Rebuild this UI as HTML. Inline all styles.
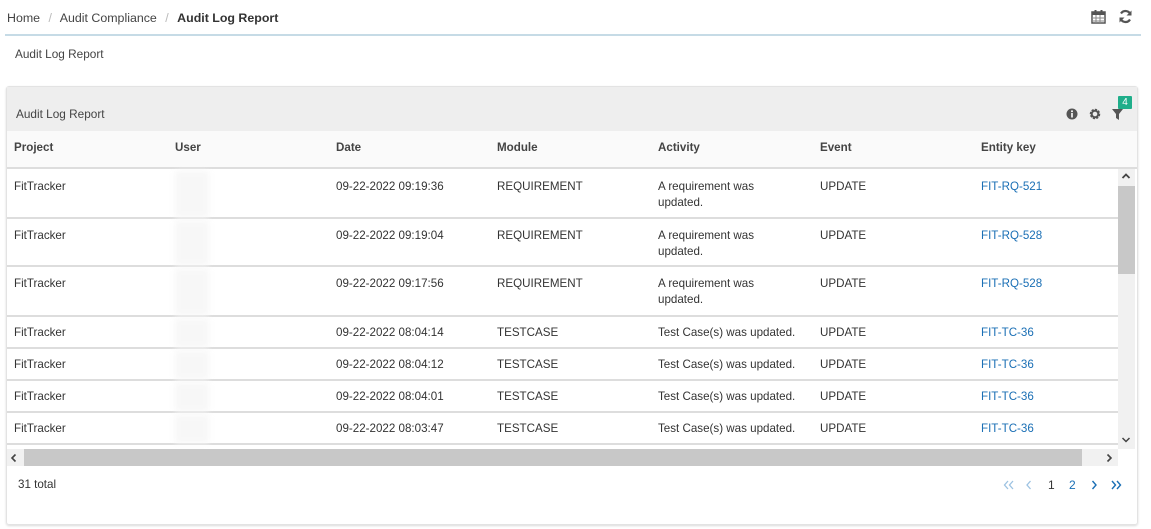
<!DOCTYPE html>
<html><head><style>
*{margin:0;padding:0;box-sizing:border-box}
body{width:1151px;height:529px;background:#fff;font-family:"Liberation Sans",sans-serif;font-size:12px;color:#333;position:relative;overflow:hidden}
.a{position:absolute;white-space:nowrap}
.row{position:absolute;left:7px;width:1111px;border-bottom:2px solid #ddd}
.cell{position:absolute;font-size:11.6px;color:#333;line-height:16px;white-space:nowrap}
.cell.link{color:#1a6fb5}
.blur{position:absolute;left:168px;width:34px;background:#f7f7f7;filter:blur(3px)}
.h{top:141px;font-weight:bold;font-size:11.6px;color:#444}
.arr{position:absolute;font-family:"DejaVu Sans",sans-serif;font-size:13px;color:#333}
</style></head><body>
<div class="a" style="left:7px;top:11px;font-size:12.4px;color:#444">Home <span style="color:#bbb;margin:0 5px">/</span> Audit Compliance <span style="color:#bbb;margin:0 5px">/</span> <b style="color:#333">Audit Log Report</b></div>
<svg class="a" style="left:1091px;top:9px" width="15" height="15" viewBox="0 0 15 15"><rect x="1" y="3" width="13" height="11" fill="none" stroke="#555" stroke-width="1.5"/><rect x="1" y="3" width="13" height="3" fill="#555"/><path d="M5 6v8M9 6v8M1 9h13M1 12h13" stroke="#888" stroke-width="1"/><rect x="3.5" y="1" width="2" height="3" fill="#555"/><rect x="9.5" y="1" width="2" height="3" fill="#555"/></svg>
<svg class="a" style="left:1118px;top:9px" width="15" height="15" viewBox="0 0 15 15"><path d="M12.5 6A5.2 5.2 0 0 0 3 4.5M2.5 9A5.2 5.2 0 0 0 12 10.5" fill="none" stroke="#555" stroke-width="2.2"/><path d="M13.5 1.5v5h-5zM1.5 13.5v-5h5z" fill="#555"/></svg>
<div class="a" style="left:5px;top:34px;width:1136px;height:2px;background:#c6dbe6"></div>
<div class="a" style="left:15px;top:47px;font-size:11.8px;color:#444">Audit Log Report</div>
<div class="a" style="left:6px;top:86px;width:1132px;height:439px;border:1px solid #e3e3e3;border-radius:3px;box-shadow:0 1px 2px rgba(0,0,0,.15)"></div>
<div class="a" style="left:7px;top:87px;width:1130px;height:44px;background:#eeeeee"></div>
<div class="a" style="left:16px;top:107px;font-size:11.8px;color:#444">Audit Log Report</div>
<svg class="a" style="left:1066px;top:108px" width="12" height="12" viewBox="0 0 12 12"><circle cx="6" cy="6" r="5.5" fill="#555"/><rect x="5.2" y="5" width="1.6" height="4.5" fill="#fff"/><circle cx="6" cy="3.3" r="1" fill="#fff"/></svg>
<svg class="a" style="left:1089px;top:108px" width="12" height="12" viewBox="0 0 12 12"><circle cx="6" cy="6" r="4" fill="none" stroke="#555" stroke-width="2.5" stroke-dasharray="2 1.1"/><circle cx="6" cy="6" r="3.3" fill="none" stroke="#555" stroke-width="2"/></svg>
<svg class="a" style="left:1112px;top:108px" width="11" height="12" viewBox="0 0 11 12"><path d="M0 1h11L7 6v6L4 10V6z" fill="#555"/></svg>
<div class="a" style="left:1118px;top:96px;width:14px;height:13px;background:#1fae8a;color:#fff;font-size:10px;text-align:center;line-height:13px;border-radius:1px">4</div>
<div class="a" style="left:7px;top:131px;width:1130px;height:38px;background:#fafafa;border-bottom:2px solid #ddd"></div>
<div class="a h" style="left:14px">Project</div>
<div class="a h" style="left:175px">User</div>
<div class="a h" style="left:336px">Date</div>
<div class="a h" style="left:497px">Module</div>
<div class="a h" style="left:658px">Activity</div>
<div class="a h" style="left:820px">Event</div>
<div class="a h" style="left:981px">Entity key</div>

<div class="row" style="top:169px;height:50px"><div class="cell" style="left:7px;top:10px">FitTracker</div><div class="blur" style="top:2px;height:46px"></div><div class="cell" style="left:329px;top:10px">09-22-2022 09:19:36</div><div class="cell" style="left:490px;top:10px">REQUIREMENT</div><div class="cell" style="left:651px;top:10px">A requirement was<br>updated.</div><div class="cell" style="left:813px;top:10px">UPDATE</div><div class="cell link" style="left:974px;top:10px">FIT-RQ-521</div></div>
<div class="row" style="top:219px;height:48px"><div class="cell" style="left:7px;top:9px">FitTracker</div><div class="blur" style="top:2px;height:44px"></div><div class="cell" style="left:329px;top:9px">09-22-2022 09:19:04</div><div class="cell" style="left:490px;top:9px">REQUIREMENT</div><div class="cell" style="left:651px;top:9px">A requirement was<br>updated.</div><div class="cell" style="left:813px;top:9px">UPDATE</div><div class="cell link" style="left:974px;top:9px">FIT-RQ-528</div></div>
<div class="row" style="top:267px;height:50px"><div class="cell" style="left:7px;top:9px">FitTracker</div><div class="blur" style="top:2px;height:46px"></div><div class="cell" style="left:329px;top:9px">09-22-2022 09:17:56</div><div class="cell" style="left:490px;top:9px">REQUIREMENT</div><div class="cell" style="left:651px;top:9px">A requirement was<br>updated.</div><div class="cell" style="left:813px;top:9px">UPDATE</div><div class="cell link" style="left:974px;top:9px">FIT-RQ-528</div></div>
<div class="row" style="top:317px;height:32px"><div class="cell" style="left:7px;top:8px">FitTracker</div><div class="blur" style="top:2px;height:28px"></div><div class="cell" style="left:329px;top:8px">09-22-2022 08:04:14</div><div class="cell" style="left:490px;top:8px">TESTCASE</div><div class="cell" style="left:651px;top:8px">Test Case(s) was updated.</div><div class="cell" style="left:813px;top:8px">UPDATE</div><div class="cell link" style="left:974px;top:8px">FIT-TC-36</div></div>
<div class="row" style="top:349px;height:32px"><div class="cell" style="left:7px;top:8px">FitTracker</div><div class="blur" style="top:2px;height:28px"></div><div class="cell" style="left:329px;top:8px">09-22-2022 08:04:12</div><div class="cell" style="left:490px;top:8px">TESTCASE</div><div class="cell" style="left:651px;top:8px">Test Case(s) was updated.</div><div class="cell" style="left:813px;top:8px">UPDATE</div><div class="cell link" style="left:974px;top:8px">FIT-TC-36</div></div>
<div class="row" style="top:381px;height:32px"><div class="cell" style="left:7px;top:8px">FitTracker</div><div class="blur" style="top:2px;height:28px"></div><div class="cell" style="left:329px;top:8px">09-22-2022 08:04:01</div><div class="cell" style="left:490px;top:8px">TESTCASE</div><div class="cell" style="left:651px;top:8px">Test Case(s) was updated.</div><div class="cell" style="left:813px;top:8px">UPDATE</div><div class="cell link" style="left:974px;top:8px">FIT-TC-36</div></div>
<div class="row" style="top:413px;height:32px"><div class="cell" style="left:7px;top:8px">FitTracker</div><div class="blur" style="top:2px;height:28px"></div><div class="cell" style="left:329px;top:8px">09-22-2022 08:03:47</div><div class="cell" style="left:490px;top:8px">TESTCASE</div><div class="cell" style="left:651px;top:8px">Test Case(s) was updated.</div><div class="cell" style="left:813px;top:8px">UPDATE</div><div class="cell link" style="left:974px;top:8px">FIT-TC-36</div></div>

<div class="a" style="left:1118px;top:169px;width:17px;height:280px;background:#f1f1f1"></div>
<div class="a" style="left:1118px;top:186px;width:17px;height:88px;background:#c8c8c8"></div>
<svg class="a" style="left:1121px;top:172px" width="10" height="8" viewBox="0 0 10 8"><path d="M1.5 6L5 2.5 8.5 6" fill="none" stroke="#444" stroke-width="1.8"/></svg>
<svg class="a" style="left:1121px;top:436px" width="10" height="8" viewBox="0 0 10 8"><path d="M1.5 2L5 5.5 8.5 2" fill="none" stroke="#444" stroke-width="1.5"/></svg>
<div class="a" style="left:7px;top:449px;width:1111px;height:17px;background:#f1f1f1"></div>
<div class="a" style="left:24px;top:449px;width:1058px;height:17px;background:#c8c8c8"></div>
<svg class="a" style="left:10px;top:453px" width="8" height="10" viewBox="0 0 8 10"><path d="M5.5 1.5L2 5l3.5 3.5" fill="none" stroke="#444" stroke-width="1.6"/></svg>
<svg class="a" style="left:1105px;top:453px" width="8" height="10" viewBox="0 0 8 10"><path d="M2.5 1.5L6 5 2.5 8.5" fill="none" stroke="#444" stroke-width="1.6"/></svg>
<div class="a" style="left:18px;top:478px;font-size:11.6px;color:#333">31 total</div>
<svg class="a" style="left:1003px;top:480px" width="12" height="10" viewBox="0 0 12 10"><path d="M5 1L1.5 5 5 9M10 1L6.5 5 10 9" fill="none" stroke="#9cc2e2" stroke-width="1.3"/></svg>
<svg class="a" style="left:1025px;top:480px" width="8" height="10" viewBox="0 0 8 10"><path d="M5.5 1L2 5l3.5 4" fill="none" stroke="#9cc2e2" stroke-width="1.3"/></svg>
<div class="a" style="left:1048px;top:478px;font-size:12px;color:#333">1</div>
<div class="a" style="left:1069px;top:478px;font-size:12px;color:#1a6fb5">2</div>
<svg class="a" style="left:1090px;top:480px" width="8" height="10" viewBox="0 0 8 10"><path d="M2.5 1L6 5 2.5 9" fill="none" stroke="#1a6fb5" stroke-width="1.4"/></svg>
<svg class="a" style="left:1110px;top:480px" width="12" height="10" viewBox="0 0 12 10"><path d="M2 1l3.5 4L2 9M7 1l3.5 4L7 9" fill="none" stroke="#1a6fb5" stroke-width="1.4"/></svg>
</body></html>
